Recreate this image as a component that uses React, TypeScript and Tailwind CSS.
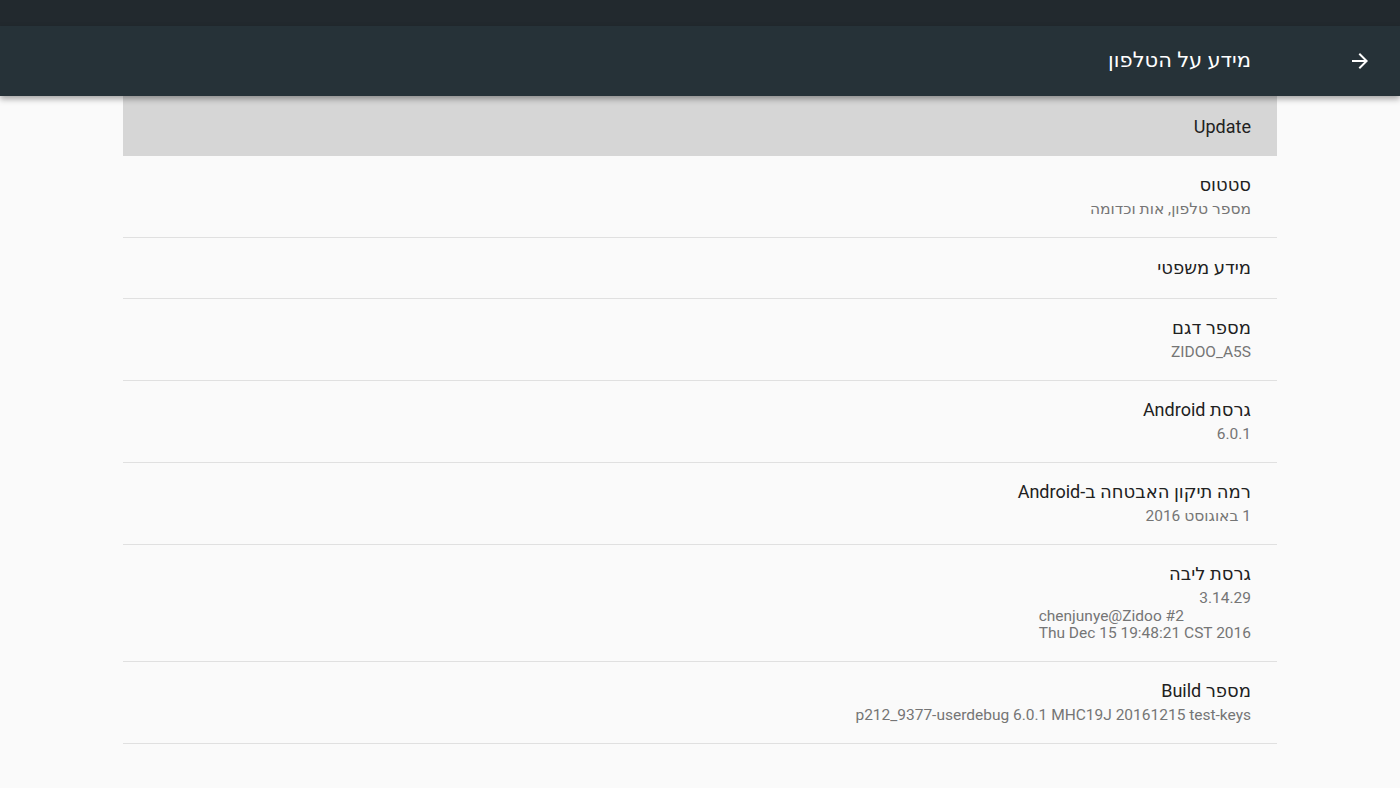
import React from "react";

type Row = {
  title: string;
  lines?: string[];
  extra?: string[];
};

const rows: Row[] = [
  { title: "סטטוס", lines: ["מספר טלפון, אות וכדומה"] },
  { title: "מידע משפטי" },
  { title: "מספר דגם", lines: ["ZIDOO_A5S"] },
  { title: "גרסת Android", lines: ["6.0.1"] },
  { title: "רמה תיקון האבטחה ב-Android", lines: ["1 באוגוסט 2016"] },
  {
    title: "גרסת ליבה",
    lines: ["3.14.29"],
    extra: ["chenjunye@Zidoo #2", "Thu Dec 15 19:48:21 CST 2016"],
  },
  { title: "מספר Build", lines: ["p212_9377-userdebug 6.0.1 MHC19J 20161215 test-keys"] },
];

function ArrowIcon() {
  return (
    <svg width="24" height="24" viewBox="0 0 24 24" fill="#ffffff">
      <path d="M12 4l-1.41 1.41L16.17 11H4v2h12.17l-5.58 5.59L12 20l8-8z" />
    </svg>
  );
}

function SettingRow({ row }: { row: Row }) {
  const single = !row.lines;
  return (
    <div
      className={
        single
          ? "flex h-[61px] items-center border-b border-[#e0e0e0] pr-[26px]"
          : "flex flex-col items-start border-b border-[#e0e0e0] pr-[26px] pt-[17px] pb-[19px]"
      }
    >
      <div className="text-[18px] leading-[24px] text-[#212121]">{row.title}</div>
      {row.lines && (
        <div className="mt-[4px] flex flex-col items-start text-[15.5px] leading-[17px] text-[#757575]">
          {row.lines.map((l) => (
            <div key={l}>{l}</div>
          ))}
          {row.extra && (
            <div dir="ltr" className="mt-[1px] text-left">
              {row.extra.map((l) => (
                <div key={l}>{l}</div>
              ))}
            </div>
          )}
        </div>
      )}
    </div>
  );
}

export default function App() {
  return (
    <div
      dir="rtl"
      className="flex min-h-[788px] flex-col bg-[#fafafa]"
      style={{ fontFamily: "Roboto, 'Noto Sans', 'DejaVu Sans', sans-serif" }}
    >
      <div className="h-[26px] bg-[#22292e]" />
      <header className="relative z-10 flex h-[70px] items-center gap-[97px] bg-[#263238] pr-[28px] shadow-[0_3px_6px_rgba(0,0,0,0.35)]">
        <ArrowIcon />
        <h1 className="text-[21px] font-normal text-white">מידע על הטלפון</h1>
      </header>
      <main className="mx-auto w-[1154px]">
        <div className="flex h-[60px] items-center bg-[#d6d6d6] pr-[26px] text-[18px] text-[#212121]">
          Update
        </div>
        {rows.map((r) => (
          <SettingRow key={r.title} row={r} />
        ))}
      </main>
    </div>
  );
}
